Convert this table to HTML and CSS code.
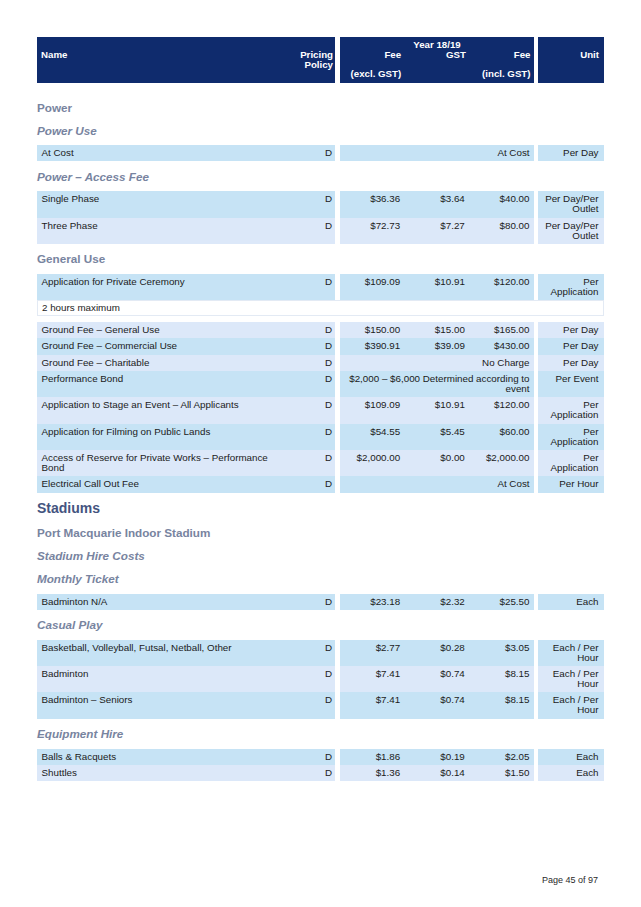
FILE: index.html
```html
<!DOCTYPE html>
<html>
<head>
<meta charset="utf-8">
<link rel="stylesheet" href="styles.css">
</head>
<body>
<div class="page">
  <div class="thead">
    <div class="hseg ha">
      <span class="hname">Name</span>
      <span class="hpol">Pricing<br>Policy</span>
    </div>
    <div class="hseg hb">
      <div class="hyear">Year 18/19</div>
      <div class="hcols"><span>Fee</span><span>GST</span><span>Fee</span></div>
      <div class="hcols hsub"><span>(excl. GST)</span><span></span><span>(incl. GST)</span></div>
    </div>
    <div class="hseg hc">Unit</div>
  </div>

  <h2 class="h-sec">Power</h2>
  <h3 class="h-sub">Power Use</h3>
  <div class="tbl">
    <div class="row">
      <div class="seg a"><span class="name">At Cost</span><span class="pol">D</span></div>
      <div class="seg b"><span class="all">At Cost</span></div>
      <div class="seg c">Per Day</div>
    </div>
  </div>

  <h3 class="h-sub">Power – Access Fee</h3>
  <div class="tbl">
    <div class="row">
      <div class="seg a"><span class="name">Single Phase</span><span class="pol">D</span></div>
      <div class="seg b"><span>$36.36</span><span>$3.64</span><span>$40.00</span></div>
      <div class="seg c">Per Day/Per<br>Outlet</div>
    </div>
    <div class="row alt">
      <div class="seg a"><span class="name">Three Phase</span><span class="pol">D</span></div>
      <div class="seg b"><span>$72.73</span><span>$7.27</span><span>$80.00</span></div>
      <div class="seg c">Per Day/Per<br>Outlet</div>
    </div>
  </div>

  <h2 class="h-sec">General Use</h2>
  <div class="tbl">
    <div class="row">
      <div class="seg a"><span class="name">Application for Private Ceremony</span><span class="pol">D</span></div>
      <div class="seg b"><span>$109.09</span><span>$10.91</span><span>$120.00</span></div>
      <div class="seg c">Per<br>Application</div>
    </div>
    <div class="note">2 hours maximum</div>
    <div class="row alt">
      <div class="seg a"><span class="name">Ground Fee – General Use</span><span class="pol">D</span></div>
      <div class="seg b"><span>$150.00</span><span>$15.00</span><span>$165.00</span></div>
      <div class="seg c">Per Day</div>
    </div>
    <div class="row">
      <div class="seg a"><span class="name">Ground Fee – Commercial Use</span><span class="pol">D</span></div>
      <div class="seg b"><span>$390.91</span><span>$39.09</span><span>$430.00</span></div>
      <div class="seg c">Per Day</div>
    </div>
    <div class="row alt">
      <div class="seg a"><span class="name">Ground Fee – Charitable</span><span class="pol">D</span></div>
      <div class="seg b"><span class="all">No Charge</span></div>
      <div class="seg c">Per Day</div>
    </div>
    <div class="row">
      <div class="seg a"><span class="name">Performance Bond</span><span class="pol">D</span></div>
      <div class="seg b"><span class="all">$2,000 – $6,000 Determined according to<br>event</span></div>
      <div class="seg c">Per Event</div>
    </div>
    <div class="row alt">
      <div class="seg a"><span class="name">Application to Stage an Event – All Applicants</span><span class="pol">D</span></div>
      <div class="seg b"><span>$109.09</span><span>$10.91</span><span>$120.00</span></div>
      <div class="seg c">Per<br>Application</div>
    </div>
    <div class="row">
      <div class="seg a"><span class="name">Application for Filming on Public Lands</span><span class="pol">D</span></div>
      <div class="seg b"><span>$54.55</span><span>$5.45</span><span>$60.00</span></div>
      <div class="seg c">Per<br>Application</div>
    </div>
    <div class="row alt">
      <div class="seg a"><span class="name">Access of Reserve for Private Works – Performance<br>Bond</span><span class="pol">D</span></div>
      <div class="seg b"><span>$2,000.00</span><span>$0.00</span><span>$2,000.00</span></div>
      <div class="seg c">Per<br>Application</div>
    </div>
    <div class="row">
      <div class="seg a"><span class="name">Electrical Call Out Fee</span><span class="pol">D</span></div>
      <div class="seg b"><span class="all">At Cost</span></div>
      <div class="seg c">Per Hour</div>
    </div>
  </div>

  <h1 class="h-top">Stadiums</h1>
  <h2 class="h-sec">Port Macquarie Indoor Stadium</h2>
  <h3 class="h-sub">Stadium Hire Costs</h3>
  <h3 class="h-sub">Monthly Ticket</h3>
  <div class="tbl">
    <div class="row">
      <div class="seg a"><span class="name">Badminton N/A</span><span class="pol">D</span></div>
      <div class="seg b"><span>$23.18</span><span>$2.32</span><span>$25.50</span></div>
      <div class="seg c">Each</div>
    </div>
  </div>

  <h3 class="h-sub">Casual Play</h3>
  <div class="tbl">
    <div class="row">
      <div class="seg a"><span class="name">Basketball, Volleyball, Futsal, Netball, Other</span><span class="pol">D</span></div>
      <div class="seg b"><span>$2.77</span><span>$0.28</span><span>$3.05</span></div>
      <div class="seg c">Each / Per<br>Hour</div>
    </div>
    <div class="row alt">
      <div class="seg a"><span class="name">Badminton</span><span class="pol">D</span></div>
      <div class="seg b"><span>$7.41</span><span>$0.74</span><span>$8.15</span></div>
      <div class="seg c">Each / Per<br>Hour</div>
    </div>
    <div class="row">
      <div class="seg a"><span class="name">Badminton – Seniors</span><span class="pol">D</span></div>
      <div class="seg b"><span>$7.41</span><span>$0.74</span><span>$8.15</span></div>
      <div class="seg c">Each / Per<br>Hour</div>
    </div>
  </div>

  <h3 class="h-sub">Equipment Hire</h3>
  <div class="tbl">
    <div class="row">
      <div class="seg a"><span class="name">Balls &amp; Racquets</span><span class="pol">D</span></div>
      <div class="seg b"><span>$1.86</span><span>$0.19</span><span>$2.05</span></div>
      <div class="seg c">Each</div>
    </div>
    <div class="row alt">
      <div class="seg a"><span class="name">Shuttles</span><span class="pol">D</span></div>
      <div class="seg b"><span>$1.36</span><span>$0.14</span><span>$1.50</span></div>
      <div class="seg c">Each</div>
    </div>
  </div>

  <div class="footer">Page 45 of 97</div>
</div>
</body>
</html>
```

FILE: styles.css
```css
html, body {
  margin: 0;
  padding: 0;
  background: #ffffff;
}

body {
  font-family: "Liberation Sans", Arial, sans-serif;
  color: #1b1b1b;
  font-size: 9.8px;
  line-height: 10px;
}

.page {
  box-sizing: border-box;
  width: 641px;
  height: 907px;
  padding: 37px 0 22px 37px;
  display: flex;
  flex-direction: column;
}

.page > * {
  box-sizing: border-box;
  width: 567px;
  flex: none;
}

/* table header */
.thead {
  display: flex;
  height: 46px;
  margin-bottom: 12.5px;
  color: #ffffff;
  font-weight: bold;
  font-size: 9.7px;
  line-height: 10px;
}

.hseg {
  background: #0f2b6d;
  box-sizing: border-box;
}

.ha {
  width: 298px;
  display: flex;
  justify-content: space-between;
  padding: 13px 2px 0 4px;
}

.hpol {
  text-align: right;
}

.hb {
  width: 194px;
  margin-left: 5px;
  padding-top: 3px;
}

.hyear {
  text-align: center;
}

.hcols {
  display: grid;
  grid-template-columns: repeat(3, 1fr);
}

.hcols span {
  text-align: right;
  padding-right: 3.5px;
}

.hsub {
  margin-top: 9px;
}

.hc {
  width: 66px;
  margin-left: 4px;
  padding: 13px 5px 0 0;
  text-align: right;
}

/* headings */
.h-top,
.h-sec,
.h-sub {
  margin: 0;
  font-weight: bold;
}

.h-top {
  font-size: 14px;
  line-height: 25px;
  color: #44547f;
}

.h-sec {
  font-size: 11.7px;
  line-height: 23px;
  color: #7884a0;
}

.h-sub {
  font-size: 11.7px;
  line-height: 23px;
  font-style: italic;
  color: #7884a0;
}

/* tables */
.tbl {
  margin: 3.5px 0;
  display: flex;
  flex-direction: column;
}

.row {
  display: flex;
  --bg: #c6e3f5;
}

.row.alt {
  --bg: #dce8f9;
}

.seg {
  box-sizing: border-box;
  background: var(--bg);
  padding: 3px 0 3.3px 0;
}

.seg.a {
  width: 298px;
  display: flex;
  justify-content: space-between;
  padding-left: 4.5px;
  padding-right: 3px;
}

.seg.b {
  width: 194px;
  margin-left: 5px;
  display: grid;
  grid-template-columns: repeat(3, 1fr);
  align-items: start;
}

.seg.b span {
  text-align: right;
  padding-right: 4.5px;
}

.seg.b .all {
  grid-column: 1 / 4;
}

.seg.c {
  width: 66px;
  margin-left: 4px;
  text-align: right;
  padding-right: 5.5px;
}

.note {
  box-sizing: border-box;
  height: 16px;
  border: 1px solid #e3eaf4;
  background: #ffffff;
  padding: 2px 0 0 4px;
  margin-bottom: 6px;
}

.footer {
  margin-top: auto;
  text-align: right;
  padding-right: 6px;
  font-size: 9px;
  line-height: 10px;
  color: #2a2a2a;
}
```
